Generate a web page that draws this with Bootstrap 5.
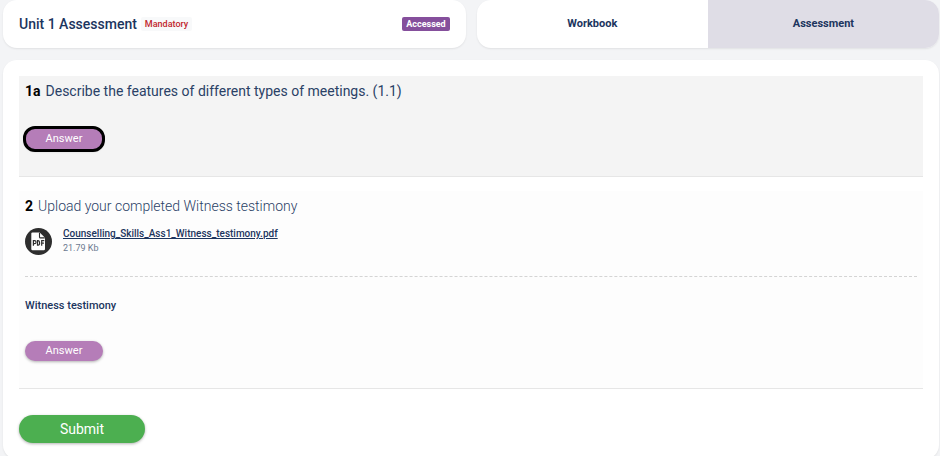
<!DOCTYPE html>
<html lang="en">
<head>
<meta charset="utf-8">
<meta name="viewport" content="width=device-width, initial-scale=1">
<title>Unit 1 Assessment</title>
<link href="https://cdn.jsdelivr.net/npm/bootstrap@5.3.0/dist/css/bootstrap.min.css" rel="stylesheet">
<style>
  body { font-family: Roboto, "Liberation Sans", sans-serif; background: #f3f4f6; color: #1c355e; }
  .page { padding: 0 1px 0 3px; }
  .panel { background: #fff; border-radius: 14px; box-shadow: 0 1px 2px rgba(0, 0, 0, .08); }
  .top-row { gap: 11px; margin-bottom: 12px; }
  .top-row > * { flex: 0 1 50%; min-height: 48px; }
  .unit-title { font-size: 14px; line-height: 20px; font-weight: 500; }
  .tag { font-size: 9px; line-height: 14px; border-radius: 2px; }
  .tag-mandatory { color: #c1272d; background: #f8f9fa; font-weight: 500; padding: 0 4px; margin-left: 4px; }
  .tag-accessed { color: #fff; background: #854f9c; font-weight: 700; padding: 0 4px; }
  .tab-link { color: #1c355e; font-size: 11px; font-weight: 700; text-decoration: none; }
  .tab-link.active { background: #dfdde6; }
  .main-panel { padding: 16px; }
  .question { padding: 5px 6px 0; border-bottom: 1px solid #e6e6e6; background: #fdfdfd; }
  .question.current { background: #f4f4f4; margin-bottom: 14px; padding-bottom: 26px; }
  .question.upload { margin-bottom: 26px; padding-bottom: 27px; }
  .question-text { font-size: 14px; line-height: 20px; font-weight: 400; margin: 0; color: #2a4166; }
  .question-text strong { color: #000; font-weight: 700; margin-right: 5px; }
  .upload .question-text { font-weight: 300; }
  .btn-answer, .btn-send { color: #fff; border: 0; border-radius: 14px; box-shadow: 0 1px 3px rgba(0, 0, 0, .3); }
  .btn-answer { background: #b57db8; width: 78px; padding: 0; font-size: 11px; line-height: 20px; font-weight: 400; }
  .btn-answer:hover { background: #a56ca8; color: #fff; }
  .current .btn-answer { margin-top: 27px; line-height: 22px; outline: 3px solid #000; outline-offset: -1px; border-radius: 10px; }
  .upload .btn-answer { margin-top: 27px; }
  .btn-send { background: #4caf50; width: 126px; padding: 0; font-size: 14px; line-height: 28px; font-weight: 400; }
  .btn-send:hover { background: #419a45; color: #fff; }
  .file-row { gap: 11px; padding: 11px 0 21px; border-bottom: 1px dashed #d4d4d4; }
  .file-link { color: #1c355e; font-size: 10px; line-height: 14px; font-weight: 500; }
  .file-size { color: #6c7a90; font-size: 9px; line-height: 14px; }
  .answer-title { font-size: 11px; line-height: 16px; font-weight: 500; margin: 21px 0 0; }
</style>
<script defer src="https://cdn.jsdelivr.net/npm/bootstrap@5.3.0/dist/js/bootstrap.bundle.min.js"></script>
</head>
<body>
<div class="page">
  <header class="top-row d-flex">
    <div class="panel d-flex align-items-center px-3">
      <h1 class="unit-title mb-0">Unit 1 Assessment</h1>
      <span class="tag tag-mandatory">Mandatory</span>
      <span class="tag tag-accessed ms-auto">Accessed</span>
    </div>
    <nav class="panel d-flex overflow-hidden" aria-label="Unit sections">
      <a class="tab-link flex-fill w-50 d-flex align-items-center justify-content-center" href="#workbook">Workbook</a>
      <a class="tab-link active flex-fill w-50 d-flex align-items-center justify-content-center" href="#assessment" aria-current="page">Assessment</a>
    </nav>
  </header>
  <main class="panel main-panel" id="assessment">
    <section class="question current">
      <h2 class="question-text"><strong>1a</strong>Describe the features of different types of meetings. (1.1)</h2>
      <button type="button" class="btn btn-answer">Answer</button>
    </section>
    <section class="question upload">
      <h2 class="question-text"><strong>2</strong>Upload your completed Witness testimony</h2>
      <div class="file-row d-flex align-items-center">
        <svg width="27" height="27" viewBox="0 0 27 27" aria-hidden="true">
          <circle cx="13.500" cy="13.500" r="13.500" fill="#2e2e2e"/>
          <path d="M7.500 4.500h7.200l5.300 5.300v11.200a1.200 1.200 0 0 1-1.200 1.200H7.500a1.200 1.200 0 0 1-1.200-1.200V5.700a1.200 1.200 0 0 1 1.200-1.200z" fill="#fff"/>
          <path d="M14.500 4.700v4.200q0 1 1 1h4.300" fill="none" stroke="#2e2e2e" stroke-width="1.100"/>
          <g fill="none" stroke="#2e2e2e" stroke-width="1.200">
            <path d="M8.400 17.800v-5.100h1.200a1.400 1.400 0 0 1 0 2.900H8.400"/>
            <path d="M12.500 12.700v4.500h.7q1.400 0 1.400-2.200t-1.400-2.300z"/>
            <path d="M16.700 17.800v-5.100h2.600M16.700 15.200h2.200"/>
          </g>
        </svg>
        <div class="d-flex flex-column">
          <a class="file-link" href="#file">Counselling_Skills_Ass1_Witness_testimony.pdf</a>
          <span class="file-size">21.79 Kb</span>
        </div>
      </div>
      <h3 class="answer-title">Witness testimony</h3>
      <button type="button" class="btn btn-answer">Answer</button>
    </section>
    <button type="submit" class="btn btn-send d-block">Submit</button>
  </main>
</div>
</body>
</html>
